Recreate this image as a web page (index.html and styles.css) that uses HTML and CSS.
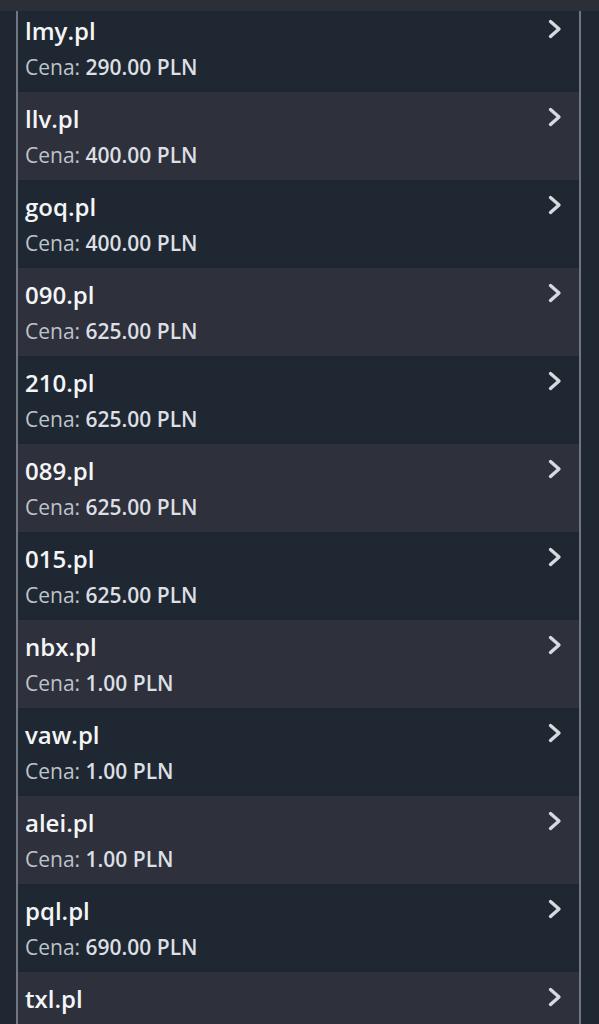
FILE: index.html
```html
<!DOCTYPE html>
<html lang="pl">
<head>
    <meta charset="UTF-8">
    <meta name="viewport" content="width=device-width, initial-scale=1.0">
    <title>Domeny</title>
    <link rel="stylesheet" href="styles.css">
</head>
<body>
    <div class="topbar"></div>
    <ul class="domain-list">
        <li class="domain"><div class="info"><div class="name">lmy.pl</div><div class="price">Cena: <b>290.00 PLN</b></div></div><svg class="chevron" viewBox="0 0 14 20"><path d="M2.5 2.5 L11 10 L2.5 17.5"/></svg></li>
        <li class="domain"><div class="info"><div class="name">llv.pl</div><div class="price">Cena: <b>400.00 PLN</b></div></div><svg class="chevron" viewBox="0 0 14 20"><path d="M2.5 2.5 L11 10 L2.5 17.5"/></svg></li>
        <li class="domain"><div class="info"><div class="name">goq.pl</div><div class="price">Cena: <b>400.00 PLN</b></div></div><svg class="chevron" viewBox="0 0 14 20"><path d="M2.5 2.5 L11 10 L2.5 17.5"/></svg></li>
        <li class="domain"><div class="info"><div class="name">090.pl</div><div class="price">Cena: <b>625.00 PLN</b></div></div><svg class="chevron" viewBox="0 0 14 20"><path d="M2.5 2.5 L11 10 L2.5 17.5"/></svg></li>
        <li class="domain"><div class="info"><div class="name">210.pl</div><div class="price">Cena: <b>625.00 PLN</b></div></div><svg class="chevron" viewBox="0 0 14 20"><path d="M2.5 2.5 L11 10 L2.5 17.5"/></svg></li>
        <li class="domain"><div class="info"><div class="name">089.pl</div><div class="price">Cena: <b>625.00 PLN</b></div></div><svg class="chevron" viewBox="0 0 14 20"><path d="M2.5 2.5 L11 10 L2.5 17.5"/></svg></li>
        <li class="domain"><div class="info"><div class="name">015.pl</div><div class="price">Cena: <b>625.00 PLN</b></div></div><svg class="chevron" viewBox="0 0 14 20"><path d="M2.5 2.5 L11 10 L2.5 17.5"/></svg></li>
        <li class="domain"><div class="info"><div class="name">nbx.pl</div><div class="price">Cena: <b>1.00 PLN</b></div></div><svg class="chevron" viewBox="0 0 14 20"><path d="M2.5 2.5 L11 10 L2.5 17.5"/></svg></li>
        <li class="domain"><div class="info"><div class="name">vaw.pl</div><div class="price">Cena: <b>1.00 PLN</b></div></div><svg class="chevron" viewBox="0 0 14 20"><path d="M2.5 2.5 L11 10 L2.5 17.5"/></svg></li>
        <li class="domain"><div class="info"><div class="name">alei.pl</div><div class="price">Cena: <b>1.00 PLN</b></div></div><svg class="chevron" viewBox="0 0 14 20"><path d="M2.5 2.5 L11 10 L2.5 17.5"/></svg></li>
        <li class="domain"><div class="info"><div class="name">pql.pl</div><div class="price">Cena: <b>690.00 PLN</b></div></div><svg class="chevron" viewBox="0 0 14 20"><path d="M2.5 2.5 L11 10 L2.5 17.5"/></svg></li>
        <li class="domain"><div class="info"><div class="name">txl.pl</div></div><svg class="chevron" viewBox="0 0 14 20"><path d="M2.5 2.5 L11 10 L2.5 17.5"/></svg></li>
    </ul>
</body>
</html>
```

FILE: styles.css
```css
body {
    font-family: "Open Sans", "Noto Sans", sans-serif;
    background-color: #1f2832;
    margin: 0;
    padding: 0;
    height: 1024px;
    overflow: hidden;
}

.topbar {
    position: relative;
    z-index: 1;
    height: 11px;
    background-color: #2c2e38;
}

.domain-list {
    list-style: none;
    margin: -7px 18px 0 16px;
    padding: 0;
    border-left: 2px solid #6f7782;
    border-right: 2px solid #6f7782;
}

.domain {
    display: flex;
    align-items: flex-start;
    justify-content: space-between;
    height: 88px;
    box-sizing: border-box;
    padding: 11px 17px 0 7px;
    background-color: #1f2832;
}

.domain:nth-child(even) {
    background-color: #2e303c;
}

.name {
    font-size: 24px;
    line-height: 32px;
    font-weight: 600;
    color: #f4f5f6;
}

.price {
    margin-top: 6px;
    font-size: 21px;
    line-height: 28px;
    color: #bfc3c9;
}

.price b {
    font-weight: 600;
    color: #dcdfe3;
}

.chevron {
    width: 14px;
    height: 20px;
    margin-top: 4px;
    fill: none;
    stroke: #d6d9dd;
    stroke-width: 3.4;
    stroke-linecap: round;
    stroke-linejoin: round;
}
```
